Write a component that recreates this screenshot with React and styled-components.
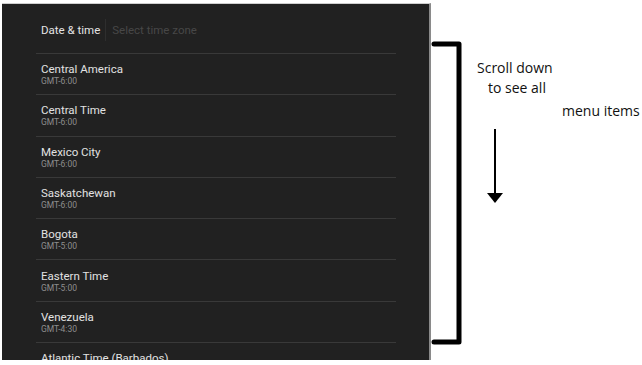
import React from 'react';
import styled, { createGlobalStyle } from 'styled-components';

const GlobalStyle = createGlobalStyle`
  html, body {
    margin: 0;
    padding: 0;
    background: #ffffff;
  }
  body {
    width: 642px;
    height: 365px;
    overflow: hidden;
  }
`;

const Page = styled.div`
  display: flex;
  align-items: flex-start;
  padding: 3px 0 0 2px;
`;

const Screen = styled.div`
  width: 427px;
  height: 356px;
  background: #212121;
  border-top: 1px solid #cfcfcf;
  border-right: 2px solid #8a8a8a;
  overflow: hidden;
  font-family: Roboto, "Liberation Sans", sans-serif;
`;

const Header = styled.div`
  display: flex;
  align-items: center;
  height: 49px;
  padding: 3px 0 0 39px;
  box-sizing: border-box;
`;

const HeaderTitle = styled.span`
  font-size: 11.5px;
  color: #e4e4e4;
  padding-right: 5px;
  border-right: 1px solid #2e2e2e;
  line-height: 22px;
`;

const Placeholder = styled.span`
  font-size: 11.5px;
  color: #474747;
  padding-left: 6px;
`;

const List = styled.ul`
  list-style: none;
  margin: 0 33px 0 34px;
  padding: 0;
`;

const Item = styled.li`
  height: 41.3px;
  border-top: 1px solid #393939;
  padding: 1px 0 0 5px;
  box-sizing: border-box;
  display: flex;
  flex-direction: column;
  justify-content: center;
`;

const Name = styled.div`
  font-size: 11.5px;
  color: #e2e2e2;
  line-height: 14px;
`;

const Offset = styled.div`
  font-size: 8.5px;
  color: #8e8e8e;
  line-height: 11px;
`;

const Notes = styled.div`
  display: flex;
  align-items: flex-start;
  font-family: "Open Sans", "Liberation Sans", sans-serif;
  color: #111;
`;

const Bracket = styled.svg`
  display: block;
  margin-top: 37px;
`;

const Caption = styled.div`
  display: flex;
  flex-direction: column;
  padding-top: 55px;
`;

const Line = styled.span`
  font-size: 14px;
  line-height: 20px;
  padding-left: ${p => p.indent}px;
  margin-top: ${p => p.gap || 0}px;
  white-space: nowrap;
`;

const Arrow = styled.svg`
  display: block;
  margin: 8px 0 0 20px;
`;

const zones = [
  { name: 'Central America', gmt: 'GMT-6:00' },
  { name: 'Central Time', gmt: 'GMT-6:00' },
  { name: 'Mexico City', gmt: 'GMT-6:00' },
  { name: 'Saskatchewan', gmt: 'GMT-6:00' },
  { name: 'Bogota', gmt: 'GMT-5:00' },
  { name: 'Eastern Time', gmt: 'GMT-5:00' },
  { name: 'Venezuela', gmt: 'GMT-4:30' },
  { name: 'Atlantic Time (Barbados)', gmt: 'GMT-4:00' }
];

const App = () => (
  <>
    <GlobalStyle />
    <Page>
      <Screen>
        <Header>
          <HeaderTitle>Date &amp; time</HeaderTitle>
          <Placeholder>Select time zone</Placeholder>
        </Header>
        <List>
          {zones.map(z => (
            <Item key={z.name}>
              <Name>{z.name}</Name>
              <Offset>{z.gmt}</Offset>
            </Item>
          ))}
        </List>
      </Screen>
      <Notes>
        <Bracket width="34" height="310" viewBox="0 0 34 310">
          <path
            d="M3 4 H28 V302 H3"
            fill="none"
            stroke="#000"
            strokeWidth="5"
            strokeLinecap="round"
            strokeLinejoin="round"
          />
        </Bracket>
        <Caption>
          <Line indent={12}>Scroll down</Line>
          <Line indent={23}>to see all</Line>
          <Line indent={97} gap={3}>menu items</Line>
          <Arrow width="20" height="80" viewBox="0 0 20 80">
            <line x1="10" y1="0" x2="10" y2="66" stroke="#000" strokeWidth="2" />
            <path d="M2 64 H18 L10 74 Z" fill="#000" />
          </Arrow>
        </Caption>
      </Notes>
    </Page>
  </>
);

export default App;
